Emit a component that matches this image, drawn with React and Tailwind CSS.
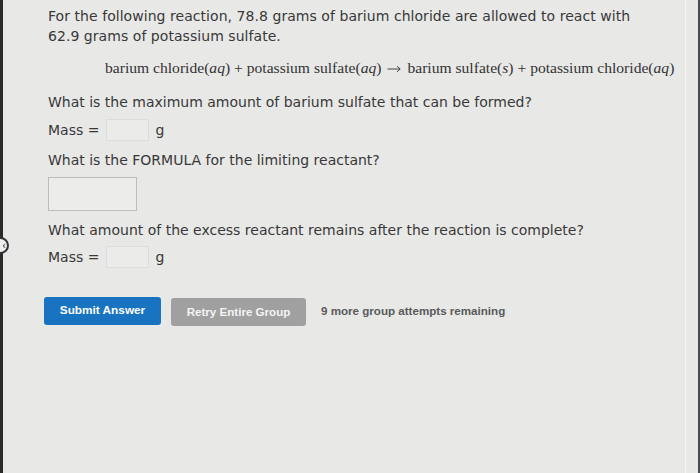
import React from "react";

function Arrow() {
  return (
    <svg className="inline-block mx-[6px] align-middle" width="14" height="8" viewBox="0 0 14 8" fill="none" stroke="#333" strokeWidth="0.9">
      <path d="M0.5 4H13" />
      <path d="M10 1.2L13.2 4L10 6.8" />
    </svg>
  );
}

export default function App() {
  return (
    <div className="relative w-[700px] h-[473px] overflow-hidden bg-[#e8e8e7] text-[#383838]" style={{ fontFamily: '"DejaVu Sans", Verdana, sans-serif' }}>
      <div className="absolute left-0 top-0 h-full w-[3px] bg-[#2a2a2a]" />
      <div className="absolute right-0 top-0 h-full w-[2px] bg-[#4a4d55]" />
      <div className="absolute right-[14px] top-0 h-full w-px bg-[#f4f4f4]" />
      <div className="absolute left-[-8px] top-[237px] w-[17px] h-[17px] rounded-full border-2 border-[#333] bg-[#eee] flex items-center justify-end pr-[1px] text-[10px] leading-none text-[#222]">‹</div>
      <div className="pl-[48px] pt-[6px] pr-[20px]">
        <p className="text-[14px] leading-[20px] whitespace-nowrap" style={{ letterSpacing: "0.05px" }}>
          For the following reaction, 78.8 grams of barium chloride are allowed to react with
          <br />62.9 grams of potassium sulfate.
        </p>
        <p className="mt-[12px] ml-[57px] text-[15.6px] leading-[20px] whitespace-nowrap text-[#333]" style={{ fontFamily: '"Liberation Serif", "DejaVu Serif", serif' }}>
          barium chloride(<i>aq</i>) + potassium sulfate(<i>aq</i>)<Arrow />barium sulfate(<i>s</i>) + potassium chloride(<i>aq</i>)
        </p>
        <p className="mt-[14px] text-[14px] leading-[20px]">What is the maximum amount of barium sulfate that can be formed?</p>
        <div className="mt-[7px] flex items-center text-[14px]">
          <span>Mass =</span>
          <div className="ml-[7px] w-[43px] h-[22px] border border-[#dcdcdc] bg-[#ebebea]" />
          <span className="ml-[6px]">g</span>
        </div>
        <p className="mt-[9px] text-[14px] leading-[20px]">What is the FORMULA for the limiting reactant?</p>
        <div className="mt-[7px] w-[89px] h-[34px] border border-[#bdbdbd] bg-[#ececeb]" />
        <p className="mt-[9px] text-[14px] leading-[20px]">What amount of the excess reactant remains after the reaction is complete?</p>
        <div className="mt-[6px] flex items-center text-[14px]">
          <span>Mass =</span>
          <div className="ml-[7px] w-[43px] h-[22px] border border-[#dcdcdc] bg-[#ebebea]" />
          <span className="ml-[6px]">g</span>
        </div>
        <div className="mt-[27px] -ml-[4px] flex items-center" style={{ fontFamily: '"Liberation Sans", Arial, sans-serif' }}>
          <button className="w-[117px] h-[28px] rounded-[3px] bg-[#1874c1] text-white text-[11.8px] font-bold">Submit Answer</button>
          <button className="ml-[10px] mt-[3px] w-[135px] h-[28px] rounded-[3px] bg-[#a0a0a0] text-[#f4f4f4] text-[11.6px] font-bold">Retry Entire Group</button>
          <span className="ml-[15px] text-[11.6px] font-bold text-[#5a5a5a]">9 more group attempts remaining</span>
        </div>
      </div>
    </div>
  );
}
